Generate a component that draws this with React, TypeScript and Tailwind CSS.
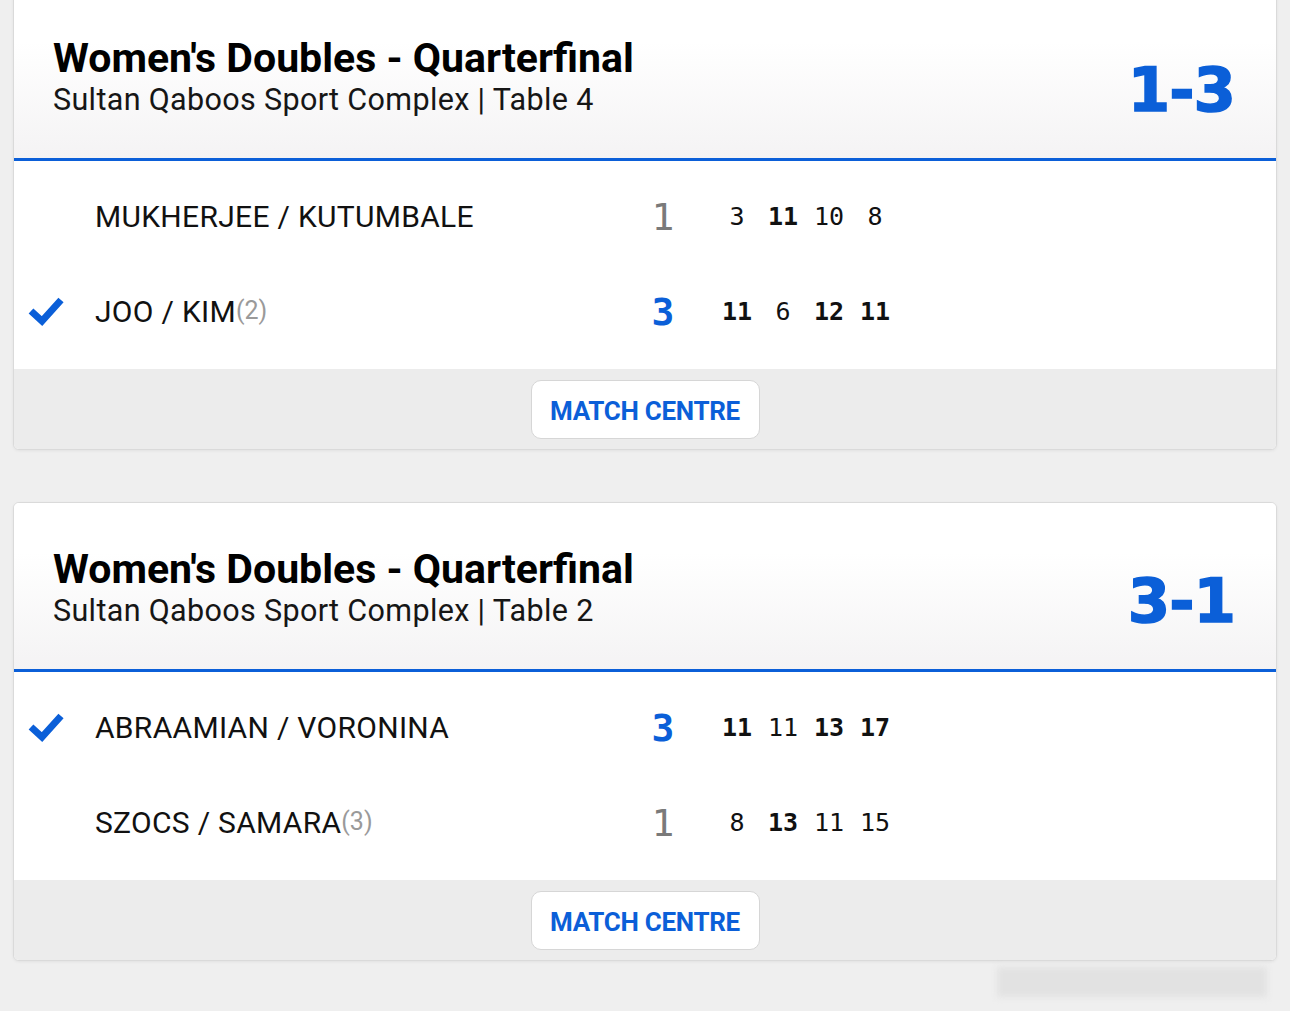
type Side = {
  name: string;
  seed?: string;
  sets: number;
  winner: boolean;
  games: { v: number; won: boolean }[];
};

type Match = {
  title: string;
  venue: string;
  score: string;
  sides: Side[];
};

const matches: Match[] = [
  {
    title: "Women's Doubles - Quarterfinal",
    venue: 'Sultan Qaboos Sport Complex | Table 4',
    score: '1-3',
    sides: [
      {
        name: 'MUKHERJEE / KUTUMBALE',
        sets: 1,
        winner: false,
        games: [
          { v: 3, won: false },
          { v: 11, won: true },
          { v: 10, won: false },
          { v: 8, won: false },
        ],
      },
      {
        name: 'JOO / KIM',
        seed: '(2)',
        sets: 3,
        winner: true,
        games: [
          { v: 11, won: true },
          { v: 6, won: false },
          { v: 12, won: true },
          { v: 11, won: true },
        ],
      },
    ],
  },
  {
    title: "Women's Doubles - Quarterfinal",
    venue: 'Sultan Qaboos Sport Complex | Table 2',
    score: '3-1',
    sides: [
      {
        name: 'ABRAAMIAN / VORONINA',
        sets: 3,
        winner: true,
        games: [
          { v: 11, won: true },
          { v: 11, won: false },
          { v: 13, won: true },
          { v: 17, won: true },
        ],
      },
      {
        name: 'SZOCS / SAMARA',
        seed: '(3)',
        sets: 1,
        winner: false,
        games: [
          { v: 8, won: false },
          { v: 13, won: true },
          { v: 11, won: false },
          { v: 15, won: false },
        ],
      },
    ],
  },
];

function Check() {
  return (
    <svg width="36" height="30" viewBox="0 0 36 30" className="block">
      <polyline
        points="3,14 14,24 33,3"
        fill="none"
        stroke="#0b5fd8"
        strokeWidth="7"
        strokeLinejoin="miter"
      />
    </svg>
  );
}

function SideRow({ side }: { side: Side }) {
  return (
    <div className="h-[95px] flex items-center">
      <div className="w-[81px] pl-[14px] flex items-center">{side.winner && <Check />}</div>
      <div className="w-[544px] text-[30px] text-[#111] tracking-[0.3px] font-['Roboto',sans-serif] leading-none">
        {side.name}
        {side.seed && <span className="text-[25px] text-[#9a9a9a] tracking-normal align-[3px]">{side.seed}</span>}
      </div>
      <div
        className={`w-[48px] text-center text-[38px] leading-none font-['DejaVu_Sans_Mono',monospace] ${
          side.winner ? 'text-[#0b5fd8] font-bold' : 'text-[#7a7a7a]'
        }`}
      >
        {side.sets}
      </div>
      <div className="w-[27px]" />
      <div className="flex">
        {side.games.map((g, i) => (
          <div
            key={i}
            className={`w-[46px] text-center text-[25px] leading-none text-[#111] font-['DejaVu_Sans_Mono',monospace] ${
              g.won ? 'font-bold' : ''
            }`}
          >
            {g.v}
          </div>
        ))}
      </div>
    </div>
  );
}

function MatchCard({ match, first }: { match: Match; first?: boolean }) {
  return (
    <div
      className={`bg-white border border-[#dadada] rounded-[6px] overflow-hidden shadow-[0_1px_3px_rgba(0,0,0,0.06)] ${
        first ? 'mt-[-9px]' : 'mt-[52px]'
      }`}
    >
      {/* Header */}
      <div className="bg-linear-to-b from-white from-30% to-[#f4f3f4] h-[166px] pl-[39px] pr-[41px] flex items-center justify-between">
        <div className="font-['Roboto',sans-serif] text-black mt-[6px]">
          <div className="text-[41px] font-bold leading-[44px]">{match.title}</div>
          <div className="text-[30.5px] leading-[40px] tracking-[0.35px] text-[#161616]">{match.venue}</div>
        </div>
        <div className="text-[61px] font-bold leading-none text-[#0b5fd8] tracking-[-1px] mt-[28px] font-['DejaVu_Sans',sans-serif] [-webkit-text-stroke:1.5px_#0b5fd8]">
          {match.score}
        </div>
      </div>
      <div className="h-[3px] bg-[#0b5fd8]" />

      {/* Rows */}
      <div className="pt-[8px] pb-[10px] bg-white">
        {match.sides.map((s, i) => (
          <SideRow key={i} side={s} />
        ))}
      </div>

      {/* Footer */}
      <div className="bg-[#ececec] pt-[11px] pb-[10px] flex justify-center">
        <button className="w-[229px] h-[59px] pt-[4px] rounded-[10px] border border-[#d6d6d6] bg-white text-[#0b5fd8] font-bold text-[26px] font-['Roboto',sans-serif] tracking-[-0.3px]">
          MATCH CENTRE
        </button>
      </div>
    </div>
  );
}

export default function App() {
  return (
    <div className="w-[1290px] h-[1011px] overflow-hidden bg-[#efefef] px-[13px]">
      {matches.map((m, i) => (
        <MatchCard key={i} match={m} first={i === 0} />
      ))}
      <div className="flex justify-end pr-[10px] mt-[6px]">
        <div className="w-[270px] h-[30px] bg-[#e2e2e2] blur-[3px]" />
      </div>
    </div>
  );
}
